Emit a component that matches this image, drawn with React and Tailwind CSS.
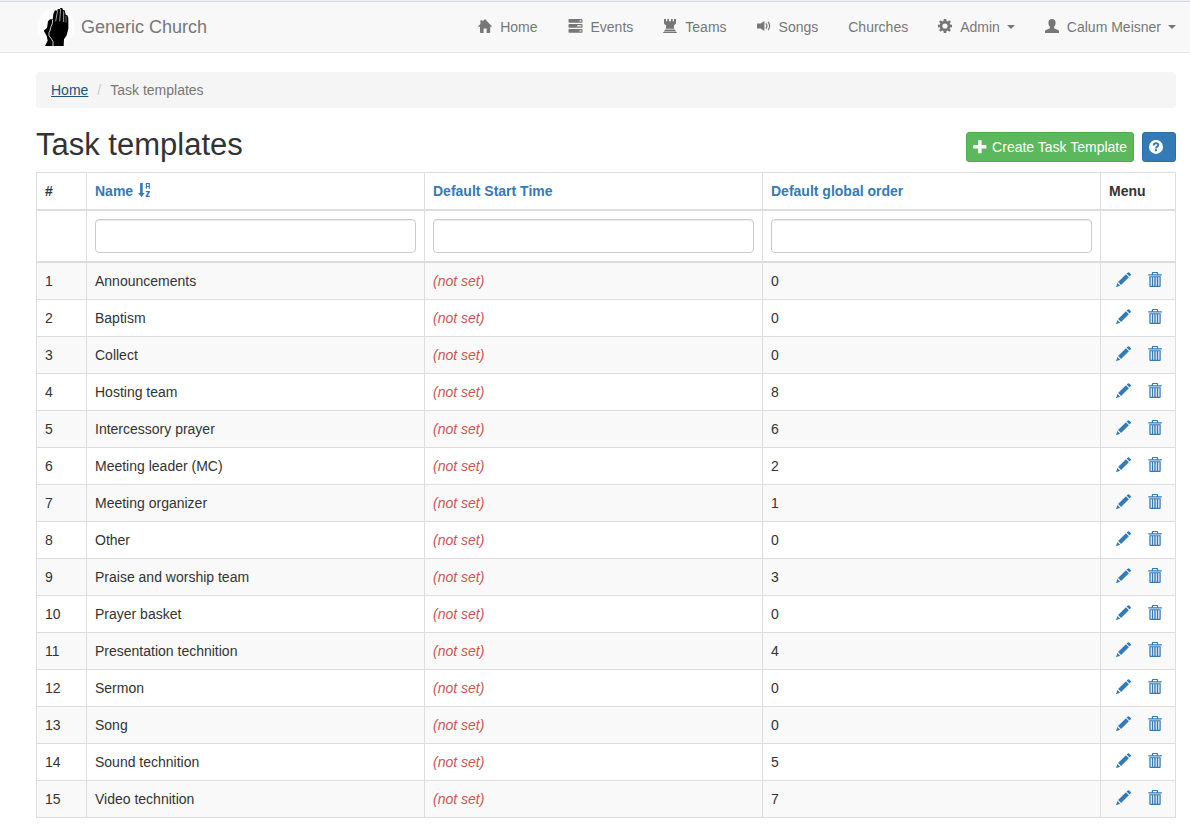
import React from "react";

function Icon({ children, className = "size-3.5" }) {
  return (
    <svg viewBox="0 0 14 14" className={`${className} shrink-0`} fill="currentColor" aria-hidden="true">
      {children}
    </svg>
  );
}

const HomeIcon = () => (
  <Icon>
    <path d="M7 0 14.2 7.8H12.2V13.2Q12.2 14 11.4 14H8.6V9.5H5.6V14H2.8Q2 14 2 13.2V7.8H-.2L2.4 4.9V1.2H4.6V2.5Z" />
  </Icon>
);

const ServerIcon = () => (
  <Icon className="h-3.5 w-[15px]">
    <path
      fillRule="evenodd"
      d="M.8 0H13.2Q14 0 14 .8V3Q14 3.8 13.2 3.8H.8Q0 3.8 0 3V.8Q0 0 .8 0ZM11 1.2V2.6H12.9V1.2ZM.8 5H13.2Q14 5 14 5.8V8Q14 8.8 13.2 8.8H.8Q0 8.8 0 8V5.8Q0 5 .8 5ZM8.6 6.2V7.6H12.9V6.2ZM.8 10H13.2Q14 10 14 10.8V13Q14 13.8 13.2 13.8H.8Q0 13.8 0 13V10.8Q0 10 .8 10ZM11 11.2V12.6H12.9V11.2Z"
    />
  </Icon>
);

const TowerIcon = () => (
  <Icon>
    <path d="M1 0H3V2.2H4.3V0H6V2.2H8V0H9.7V2.2H11V0H13V4Q13 4.8 12.3 5.3L10.8 6.4 11.2 9.8H2.8L3.2 6.4 1.7 5.3Q1 4.8 1 4ZM2.2 10.5H11.8L13.2 12.4H.8ZM.2 13H13.8V14H.2Z" />
  </Icon>
);

const SpeakerIcon = () => (
  <Icon>
    <path d="M0 4.6H3.6L7.4 2V12L3.6 9.4H0Z" />
    <g fill="none" stroke="currentColor">
      <path strokeWidth="1.2" d="M9 4.4Q10.8 7 9 9.6" />
      <path strokeWidth="1.2" d="M11.1 2.8Q14.2 7 11.1 11.2" />
    </g>
  </Icon>
);

const CogIcon = () => (
  <Icon>
    <path
      fillRule="evenodd"
      d="M5.8 0H8.2L8.6 2 9.7 2.4 11.3 1.2 12.9 2.8 11.7 4.4 12.1 5.4 14 5.8V8.2L12.1 8.6 11.7 9.6 12.9 11.2 11.3 12.8 9.7 11.6 8.6 12 8.2 14H5.8L5.4 12 4.3 11.6 2.7 12.8 1.1 11.2 2.3 9.6 1.9 8.6 0 8.2V5.8L1.9 5.4 2.3 4.4 1.1 2.8 2.7 1.2 4.3 2.4 5.4 2ZM7 4.4A2.6 2.6 0 1 0 7 9.6 2.6 2.6 0 1 0 7 4.4Z"
    />
  </Icon>
);

const UserIcon = () => (
  <Icon>
    <path d="M7 0C9.6 0 10.7 1.5 10.6 3.8 10.6 5.7 9.9 7 9.1 7.8V9Q9.4 9.6 10.6 10.1L13 11.1Q14.2 11.7 14.2 12.8V14H-.2V12.8Q-.2 11.7 1 11.1L3.4 10.1Q4.6 9.6 4.9 9V7.8C4.1 7 3.4 5.7 3.4 3.8 3.3 1.5 4.4 0 7 0Z" />
  </Icon>
);

const PlusIcon = () => (
  <Icon>
    <path d="M5.2.2H8.6V5H13.4V8.4H8.6V13.2H5.2V8.4H.2V5H5.2Z" />
  </Icon>
);

const HelpIcon = () => (
  <Icon>
    <circle cx="7" cy="6.9" r="7" />
    <path fill="none" stroke="#337ab7" strokeWidth="1.9" d="M4.7 5.5Q4.7 3.3 7.1 3.3 9.3 3.3 9.3 5 9.3 6 8.2 6.6 7 7.2 7 8.5" />
    <path fill="#337ab7" d="M6 9.3H8V11.2H6Z" />
  </Icon>
);

const SortIcon = () => (
  <Icon>
    <path d="M2.1 0H4.7V10H6.7L3.5 14 .2 10H2.1Z" />
    <path fillRule="evenodd" d="M7.8 0H11.9V5.8H10.7V4.1H9V5.8H7.8ZM9 1.1V2.9H10.7V1.1Z" />
    <path d="M7.8 8H11.9V9.3L9.6 12.7H11.9V14H7.7V12.7L10 9.3H7.8Z" />
  </Icon>
);

const PencilIcon = () => (
  <Icon className="size-[15px]">
    <path d="M11.1.5Q11.7-.1 12.3.5L13.7 1.9Q14.3 2.5 13.7 3.1L12.6 4.2 9.9 1.5ZM9.3 2.1 12 4.9 4.7 12.2 1.9 9.4ZM1.3 10.2 3.9 12.8 0 14.2Z" />
  </Icon>
);

const TrashIcon = () => (
  <Icon className="size-[15px]">
    <path
      fillRule="evenodd"
      d="M4.5 2V.8Q4.5 0 5.3 0H9.5Q10.3 0 10.3 .8V2H13.8V3.2H1.2V2ZM5.6 1V2H9.2V1ZM2.2 4H12.8V13Q12.8 14 11.8 14H3.2Q2.2 14 2.2 13ZM3.4 5V12.9H4.5V5ZM5.8 5V12.9H6.8V5ZM8.1 5V12.9H9.1V5ZM10.5 5V12.9H11.6V5Z"
    />
  </Icon>
);

const Caret = () => (
  <svg viewBox="0 0 8 4" className="ml-[7px] h-1 w-2" fill="currentColor" aria-hidden="true">
    <path d="M0 0H8L4 4Z" />
  </svg>
);

function HandsLogo() {
  return (
    <svg viewBox="21 24 114 114" className="size-[38px] shrink-0" aria-hidden="true">
      <circle cx="78" cy="81" r="57" fill="#fdfdfd" />
      <path d="M45 138 53 122 50 108 42 94 43 90 51 84 54 64 60 58 68 58 70 42 75 31 80 32 84 27 89 28 92 23 97 25 99 30 104 31 107 44 112 46 115 54 115 86 110 106 102 118 101 138Z" />
      <g fill="none" stroke="#f4f4f4" strokeLinejoin="round">
        <path strokeWidth="2.5" d="M68 59 67 70 63 80 60 92 57 98 57 107 64 116 69 125 69 138" />
        <path strokeWidth="2" d="M83 31 77 64M92 27 89 64M101 34 101 66" />
        <path strokeWidth="1.2" d="M108 47 108 68" />
      </g>
    </svg>
  );
}

const NAV = [
  { label: "Home", icon: HomeIcon },
  { label: "Events", icon: ServerIcon },
  { label: "Teams", icon: TowerIcon },
  { label: "Songs", icon: SpeakerIcon },
  { label: "Churches" },
  { label: "Admin", icon: CogIcon, menu: true },
  { label: "Calum Meisner", icon: UserIcon, menu: true },
];

const TASKS = [
  ["Announcements", 0],
  ["Baptism", 0],
  ["Collect", 0],
  ["Hosting team", 8],
  ["Intercessory prayer", 6],
  ["Meeting leader (MC)", 2],
  ["Meeting organizer", 1],
  ["Other", 0],
  ["Praise and worship team", 3],
  ["Prayer basket", 0],
  ["Presentation technition", 4],
  ["Sermon", 0],
  ["Song", 0],
  ["Sound technition", 5],
  ["Video technition", 7],
];

const FILTERS = ["Name", "Default Start Time", "Default global order"];

function NavItem({ label, icon: ItemIcon, menu }) {
  const content = (
    <>
      {ItemIcon && (
        <span className="mr-2 mb-0.5">
          <ItemIcon />
        </span>
      )}
      {label}
      {menu && <Caret />}
    </>
  );
  return (
    <li>
      {menu ? (
        <button type="button" aria-haspopup="menu" className="flex items-center whitespace-nowrap">
          {content}
        </button>
      ) : (
        <a href="#" className="flex items-center whitespace-nowrap">
          {content}
        </a>
      )}
    </li>
  );
}

export default function App() {
  return (
    <div className="min-h-screen bg-white pb-3 font-['Liberation_Sans',Arial,sans-serif] text-sm leading-5 text-[#333]">
      <header className="border-t border-[#f0f0f0]">
        <nav className="flex min-h-[52px] items-center justify-between border-t border-b border-t-[#d0d7e5] border-b-[#e7e7e7] bg-[#f8f8f8] pr-3.5 pl-[37px] text-[#777]">
          <a href="#" className="flex items-center gap-1.5 text-lg leading-5 whitespace-nowrap">
            <HandsLogo />
            Generic Church
          </a>
          <ul className="flex items-center gap-[30px]">
            {NAV.map((item) => (
              <NavItem key={item.label} {...item} />
            ))}
          </ul>
        </nav>
      </header>

      <main className="pt-[19px] pr-3.5 pl-9">
        <nav aria-label="Breadcrumb">
          <ol className="flex rounded bg-[#f5f5f5] px-[15px] py-2">
            <li>
              <a href="#" className="text-[#23527c] underline">
                Home
              </a>
            </li>
            <li aria-hidden="true" className="px-[9px] text-[#ccc]">
              /
            </li>
            <li className="text-[#777]">Task templates</li>
          </ol>
        </nav>

        <div className="mt-5 mb-2.5 flex items-end justify-between">
          <h1 className="text-[31px] leading-[34px] font-medium">Task templates</h1>
          <div className="flex gap-2">
            <button
              type="button"
              className="flex items-center gap-[5px] rounded-[3px] border border-[#4cae4c] bg-[#5cb85c] px-1.5 py-1 text-white"
            >
              <PlusIcon />
              Create Task Template
            </button>
            <button
              type="button"
              aria-label="Help"
              className="flex w-[34px] items-center rounded-[3px] border border-[#2e6da4] bg-[#337ab7] px-1.5 py-1 text-white"
            >
              <HelpIcon />
            </button>
          </div>
        </div>

        <table className="w-full table-fixed border-collapse border border-[#ddd] text-left [&_td]:border [&_td]:border-[#ddd] [&_td]:p-2 [&_th]:border [&_th]:border-[#ddd] [&_th]:p-2">
          <colgroup>
            <col className="w-[50px]" />
            <col />
            <col />
            <col />
            <col className="w-[75px]" />
          </colgroup>
          <thead>
            <tr className="border-b-2 border-[#ddd]">
              <th>#</th>
              <th>
                <a href="#" className="flex items-center gap-[5px] text-[#337ab7]">
                  Name
                  <span className="mb-0.5">
                    <SortIcon />
                  </span>
                </a>
              </th>
              <th>
                <a href="#" className="text-[#337ab7]">
                  Default Start Time
                </a>
              </th>
              <th>
                <a href="#" className="text-[#337ab7]">
                  Default global order
                </a>
              </th>
              <th>Menu</th>
            </tr>
            <tr className="border-b-2 border-[#ddd]">
              <td />
              {FILTERS.map((name) => (
                <td key={name}>
                  <input
                    type="text"
                    aria-label={name}
                    className="block h-[34px] w-full rounded border border-[#ccc] bg-white px-3 shadow-[inset_0_1px_1px_rgba(0,0,0,0.075)]"
                  />
                </td>
              ))}
              <td />
            </tr>
          </thead>
          <tbody>
            {TASKS.map(([name, order], i) => (
              <tr key={name} className="odd:bg-[#f9f9f9]">
                <td>{i + 1}</td>
                <td>{name}</td>
                <td>
                  <em className="text-[#c55]">(not set)</em>
                </td>
                <td>{order}</td>
                <td>
                  <div className="flex h-5 items-center gap-4 pb-[3px] pl-[7px] text-[#337ab7]">
                    <a href="#" aria-label={`Update ${name}`}>
                      <PencilIcon />
                    </a>
                    <a href="#" aria-label={`Delete ${name}`}>
                      <TrashIcon />
                    </a>
                  </div>
                </td>
              </tr>
            ))}
          </tbody>
        </table>
      </main>
    </div>
  );
}
